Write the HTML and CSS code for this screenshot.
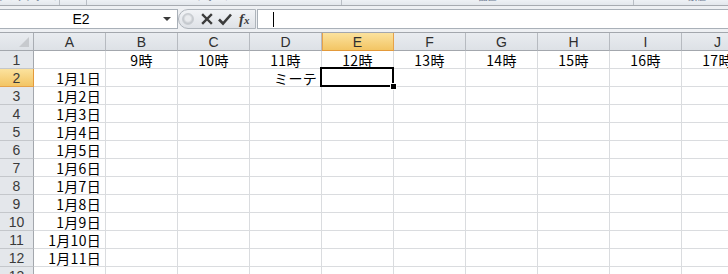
FILE: index.html
```html
<!DOCTYPE html>
<html lang="ja">
<head>
<meta charset="utf-8">
<link rel="stylesheet" href="styles.css">
</head>
<body>
<div class="ribbon">
  <div class="grp g1"><span class="lbl">クリップボード</span></div>
  <div class="grp g2"><span class="lbl"></span></div>
  <div class="grp g3"><span class="lbl">フォント</span></div>
  <div class="grp g4"><span class="lbl">配置</span></div>
  <div class="grp g5"><span class="lbl">数値</span></div>
</div>
<div class="fwrap">
  <div class="fbar">
    <div class="namebox">
      <span class="ref">E2</span>
      <svg class="drop" width="10" height="6" viewBox="0 0 10 6"><path d="M1 1h8L5 5z" fill="#3a3a3a"/></svg>
    </div>
    <div class="fbtns">
      <span class="dot"></span>
      <svg class="ico" width="14" height="14" viewBox="0 0 14 14"><path d="M3 3l8 8M11 3l-8 8" stroke="#3b3b3b" stroke-width="2.4" stroke-linecap="square"/></svg>
      <svg class="ico" width="16" height="14" viewBox="0 0 16 14"><path d="M2 7.5l4 4L14 2.5" stroke="#3b3b3b" stroke-width="2.6" fill="none"/></svg>
      <span class="fx">f<small>x</small></span>
    </div>
    <div class="finput"><span class="caret"></span></div>
  </div>
</div>
<div class="sheet">
  <div class="corner"><span class="tri"></span></div>
  <div class="ch">A</div><div class="ch">B</div><div class="ch">C</div><div class="ch">D</div><div class="ch sel">E</div><div class="ch">F</div><div class="ch">G</div><div class="ch">H</div><div class="ch">I</div><div class="ch">J</div>

  <div class="rh">1</div><div class="c"></div><div class="c ctr">9時</div><div class="c ctr">10時</div><div class="c ctr">11時</div><div class="c ctr">12時</div><div class="c ctr">13時</div><div class="c ctr">14時</div><div class="c ctr">15時</div><div class="c ctr">16時</div><div class="c ctr">17時</div>

  <div class="rh sel">2</div><div class="c r">1月1日</div><div class="c"></div><div class="c"></div><div class="c r">ミーテ</div><div class="c active"></div><div class="c"></div><div class="c"></div><div class="c"></div><div class="c"></div><div class="c"></div>

  <div class="rh">3</div><div class="c r">1月2日</div><div class="c"></div><div class="c"></div><div class="c"></div><div class="c"></div><div class="c"></div><div class="c"></div><div class="c"></div><div class="c"></div><div class="c"></div>

  <div class="rh">4</div><div class="c r">1月3日</div><div class="c"></div><div class="c"></div><div class="c"></div><div class="c"></div><div class="c"></div><div class="c"></div><div class="c"></div><div class="c"></div><div class="c"></div>

  <div class="rh">5</div><div class="c r">1月4日</div><div class="c"></div><div class="c"></div><div class="c"></div><div class="c"></div><div class="c"></div><div class="c"></div><div class="c"></div><div class="c"></div><div class="c"></div>

  <div class="rh">6</div><div class="c r">1月5日</div><div class="c"></div><div class="c"></div><div class="c"></div><div class="c"></div><div class="c"></div><div class="c"></div><div class="c"></div><div class="c"></div><div class="c"></div>

  <div class="rh">7</div><div class="c r">1月6日</div><div class="c"></div><div class="c"></div><div class="c"></div><div class="c"></div><div class="c"></div><div class="c"></div><div class="c"></div><div class="c"></div><div class="c"></div>

  <div class="rh">8</div><div class="c r">1月7日</div><div class="c"></div><div class="c"></div><div class="c"></div><div class="c"></div><div class="c"></div><div class="c"></div><div class="c"></div><div class="c"></div><div class="c"></div>

  <div class="rh">9</div><div class="c r">1月8日</div><div class="c"></div><div class="c"></div><div class="c"></div><div class="c"></div><div class="c"></div><div class="c"></div><div class="c"></div><div class="c"></div><div class="c"></div>

  <div class="rh">10</div><div class="c r">1月9日</div><div class="c"></div><div class="c"></div><div class="c"></div><div class="c"></div><div class="c"></div><div class="c"></div><div class="c"></div><div class="c"></div><div class="c"></div>

  <div class="rh">11</div><div class="c r">1月10日</div><div class="c"></div><div class="c"></div><div class="c"></div><div class="c"></div><div class="c"></div><div class="c"></div><div class="c"></div><div class="c"></div><div class="c"></div>

  <div class="rh">12</div><div class="c r">1月11日</div><div class="c"></div><div class="c"></div><div class="c"></div><div class="c"></div><div class="c"></div><div class="c"></div><div class="c"></div><div class="c"></div><div class="c"></div>

  <div class="rh">13</div><div class="c"></div><div class="c"></div><div class="c"></div><div class="c"></div><div class="c"></div><div class="c"></div><div class="c"></div><div class="c"></div><div class="c"></div><div class="c"></div>
</div>
</body>
</html>
```

FILE: styles.css
```css
html, body {
  margin: 0;
  padding: 0;
}
body {
  width: 728px;
  height: 274px;
  overflow: hidden;
  background: #ffffff;
  font-family: "Noto Sans CJK JP", "Noto Sans", sans-serif;
}

/* ribbon remnant */
.ribbon {
  display: flex;
  height: 5px;
  overflow: hidden;
  background: linear-gradient(#eef1f5, #e3e7ec);
  border-bottom: 1px solid #a7abb1;
  width: 760px;
}
.grp {
  position: relative;
  height: 5px;
  overflow: hidden;
  border-right: 1px solid #b9bec5;
  display: flex;
  justify-content: center;
}
.g1 { width: 59px; }
.g2 { width: 26px; }
.g3 { width: 254px; }
.g4 { width: 291px; }
.g5 { flex: 1; border-right: none; }
.lbl {
  font-size: 9px;
  line-height: 12px;
  margin-top: -9px;
  color: #6a7a90;
  white-space: nowrap;
}

/* formula bar */
.fwrap {
  background: #eef0f3;
  padding: 3px 0 3px 0;
  border-bottom: 1px solid #a3a7ad;
}
.fbar {
  display: flex;
  height: 20px;
}
.namebox {
  box-sizing: border-box;
  width: 178px;
  height: 20px;
  background: #fff;
  border: 1px solid #a9b0b8;
  border-left: none;
  display: flex;
  align-items: center;
}
.ref {
  flex: 1;
  text-align: center;
  font-family: "Liberation Sans", sans-serif;
  font-size: 14px;
  line-height: 18px;
  color: #000;
}
.drop {
  margin-right: 5px;
}
.fbtns {
  box-sizing: border-box;
  width: 78px;
  height: 20px;
  background: linear-gradient(#f1f3f6, #dfe2e7);
  border: 1px solid #aeb4bb;
  border-radius: 10px 0 0 10px;
  display: flex;
  align-items: center;
  padding-left: 3px;
}
.dot {
  width: 12px;
  height: 12px;
  border-radius: 50%;
  background: radial-gradient(circle at 50% 45%, #e9ebee 0 35%, #c4c8cd 65%);
  border: 1px solid #c9cdd2;
  box-sizing: border-box;
  margin-right: 6px;
}
.ico {
  margin-right: 3px;
}
.fx {
  font-family: "Liberation Serif", serif;
  font-style: italic;
  font-weight: bold;
  font-size: 15px;
  color: #3b3b3b;
  margin-left: 3px;
  line-height: 16px;
}
.fx small {
  font-size: 11px;
}
.finput {
  flex: 1;
  box-sizing: border-box;
  height: 20px;
  background: #fff;
  border: 1px solid #a9b0b8;
  border-right: none;
  margin-left: 1px;
  display: flex;
  align-items: center;
}
.caret {
  width: 1px;
  height: 15px;
  background: #000;
  margin-left: 15px;
}

/* sheet */
.sheet {
  display: grid;
  grid-template-columns: 34px repeat(10, 72px);
  grid-auto-rows: 18px;
  width: 754px;
}
.corner, .ch, .rh, .c {
  box-sizing: border-box;
  overflow: hidden;
  white-space: nowrap;
}
.corner {
  background: linear-gradient(#e9ecf0, #dde1e6);
  border-right: 1px solid #a9adb3;
  border-bottom: 1px solid #a3a7ad;
  position: relative;
}
.tri {
  position: absolute;
  right: 4px;
  bottom: 3px;
  width: 0;
  height: 0;
  border-left: 10px solid transparent;
  border-bottom: 10px solid #c7cace;
}
.ch {
  background: linear-gradient(#e9ecf0, #dde1e6);
  border-right: 1px solid #b6bac0;
  border-bottom: 1px solid #a3a7ad;
  text-align: center;
  font-family: "Liberation Sans", sans-serif;
  font-size: 14px;
  line-height: 18px;
  color: #2f2f2f;
}
.ch.sel {
  background: linear-gradient(#fbe29e, #f3c564);
  border-bottom-color: #e3993a;
  border-right-color: #e6a24a;
  box-shadow: inset 1px 0 0 #e6a24a;
}
.rh {
  background: #e4e7eb;
  border-right: 1px solid #a3a7ad;
  border-bottom: 1px solid #c4c7cb;
  text-align: center;
  font-family: "Liberation Sans", sans-serif;
  font-size: 14px;
  line-height: 18px;
  color: #3a3a3a;
}
.rh.sel {
  background: linear-gradient(#fbe29e, #f3c564);
  border-right-color: #e3993a;
  border-bottom-color: #e6a24a;
}
.c {
  border-right: 1px solid #dadcdf;
  border-bottom: 1px solid #dadcdf;
  font-size: 14px;
  line-height: 18px;
  color: #000;
  padding: 0 2px;
  letter-spacing: 0.3px;
}
.c.ctr { text-align: center; }
.c.r { text-align: right; padding-right: 4px; }
.c.active {
  position: relative;
  overflow: visible;
}
.c.active::before {
  content: "";
  position: absolute;
  left: -2px;
  top: -2px;
  right: -1px;
  bottom: -1px;
  border: 2px solid #000;
}
.c.active::after {
  content: "";
  position: absolute;
  right: -4px;
  bottom: -4px;
  width: 5px;
  height: 5px;
  background: #000;
  border: 1px solid #fff;
}
```
